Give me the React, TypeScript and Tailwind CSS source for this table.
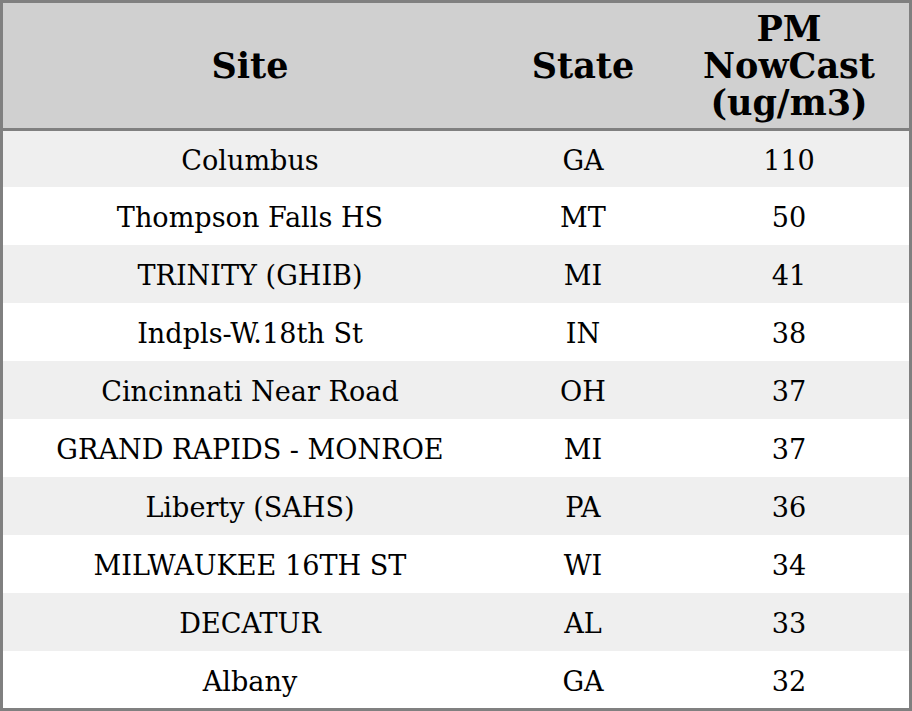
import React from "react";

const rows: [string, string, string][] = [
  ["Columbus", "GA", "110"],
  ["Thompson Falls HS", "MT", "50"],
  ["TRINITY (GHIB)", "MI", "41"],
  ["Indpls-W.18th St", "IN", "38"],
  ["Cincinnati Near Road", "OH", "37"],
  ["GRAND RAPIDS - MONROE", "MI", "37"],
  ["Liberty (SAHS)", "PA", "36"],
  ["MILWAUKEE 16TH ST", "WI", "34"],
  ["DECATUR", "AL", "33"],
  ["Albany", "GA", "32"],
];

export default function App() {
  return (
    <div
      className="w-[912px] h-[711px] border-[3px] border-[#808080] bg-white text-black flex flex-col"
      style={{ fontFamily: '"DejaVu Serif", serif' }}
    >
      <div className="grid grid-cols-[494px_172px_240px] h-[125px] shrink-0 bg-[#d0d0d0] border-b-[3px] border-[#808080] box-content text-[35px] font-bold leading-[37px]">
        <div className="flex items-center justify-center text-center">Site</div>
        <div className="flex items-center justify-center text-center">State</div>
        <div className="flex items-center justify-center text-center">
          PM
          <br />
          NowCast
          <br />
          (ug/m3)
        </div>
      </div>
      <div className="flex flex-col">
        {rows.map((r, i) => (
          <div
            key={i}
            className={`grid grid-cols-[494px_172px_240px] text-[27.1px] ${
              i === 0 ? "h-[56px]" : i === rows.length - 1 ? "h-[57px]" : "h-[58px]"
            } ${i % 2 === 0 ? "bg-[#efefef]" : "bg-white"}`}
          >
            <div className="flex items-center justify-center pt-[5px]">{r[0]}</div>
            <div className="flex items-center justify-center pt-[5px]">{r[1]}</div>
            <div className="flex items-center justify-center pt-[5px]">{r[2]}</div>
          </div>
        ))}
      </div>
    </div>
  );
}
